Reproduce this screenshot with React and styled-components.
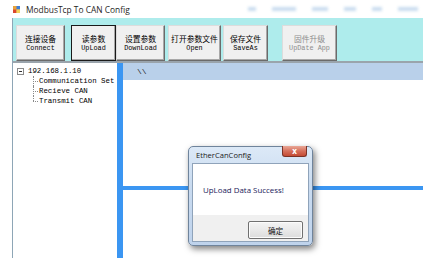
import React from 'react';
import styled, { createGlobalStyle } from 'styled-components';

const cjk = '"Noto Sans CJK SC", sans-serif';
const mono = '"Liberation Mono", "Noto Sans CJK SC", monospace';
const splitBlue = '#3b96f2';

const GlobalStyle = createGlobalStyle`
  html, body {
    margin: 0;
    padding: 0;
    background: #ffffff;
  }
  body {
    width: 432px;
    height: 258px;
    overflow: hidden;
    font-family: "Liberation Sans", sans-serif;
  }
`;

const Page = styled.div`
  position: relative;
  width: 432px;
  height: 258px;
  display: flex;
  flex-direction: column;
`;

const TitleBar = styled.div`
  height: 18px;
  display: flex;
  align-items: center;
  padding-left: 13px;
  gap: 6px;
  font-family: "Open Sans", "Liberation Sans", sans-serif;
  font-size: 8.4px;
  color: #1e1e1e;
`;

const Blurred = styled.div`
  margin-left: auto;
  margin-right: 14px;
  display: flex;
  gap: 16px;
  filter: blur(1.5px);
  span {
    display: block;
    height: 4px;
    background: #c9dcef;
  }
`;

const Window = styled.div`
  margin-left: 12px;
  width: 410px;
  flex: 1;
  display: flex;
  flex-direction: column;
  border-left: 1px solid #8ea6b6;
`;

const Toolbar = styled.div`
  height: 45px;
  background: #aeecec;
  display: flex;
  align-items: flex-start;
  padding: 7px 0 0 3px;
  box-sizing: border-box;
  border-bottom: 2px solid #9aa4ac;
`;

const ToolButton = styled.div`
  width: ${p => p.w}px;
  height: 36px;
  margin-left: ${p => p.gap || 0}px;
  box-sizing: border-box;
  background: #f0f0f0;
  border: 1px solid ${p => (p.focused ? '#1a1a1a' : '#dcdcdc')};
  border-right-color: ${p => (p.focused ? '#1a1a1a' : '#6b6b6b')};
  border-bottom-color: ${p => (p.focused ? '#1a1a1a' : '#6b6b6b')};
  box-shadow: inset -1px -1px 0 #a8a8a8;
  display: flex;
  flex-direction: column;
  align-items: center;
  justify-content: center;
  gap: 1px;
  color: ${p => (p.disabled ? '#8d8d8d' : '#000')};
`;

const Cn = styled.span`
  font-family: ${cjk};
  font-size: 7.8px;
  line-height: 9px;
  white-space: nowrap;
`;

const En = styled.span`
  font-family: ${mono};
  font-size: 6.8px;
  line-height: 8px;
  white-space: nowrap;
`;

const Main = styled.div`
  flex: 1;
  display: flex;
`;

const Tree = styled.div`
  width: 103px;
  background: #fff;
  padding-top: 3px;
  font-family: ${mono};
  font-size: 7.4px;
  color: #000;
`;

const RootRow = styled.div`
  height: 10px;
  display: flex;
  align-items: center;
  padding-left: 4px;
  gap: 4px;
`;

const ExpandBox = styled.span`
  width: 5px;
  height: 5px;
  border: 1px solid #8a8a8a;
  position: relative;
  &::after {
    content: '';
    position: absolute;
    left: 1px;
    right: 1px;
    top: 2px;
    height: 1px;
    background: #333;
  }
`;

const ChildRow = styled.div`
  height: 10px;
  display: flex;
  align-items: center;
  padding-left: 26px;
  position: relative;
  white-space: nowrap;
  &::before {
    content: '';
    position: absolute;
    left: 20px;
    top: 0;
    height: ${p => (p.last ? '5px' : '10px')};
    border-left: 1px dotted #8a8a8a;
  }
  &::after {
    content: '';
    position: absolute;
    left: 20px;
    top: 5px;
    width: 5px;
    border-top: 1px dotted #8a8a8a;
  }
`;

const Splitter = styled.div`
  width: 6px;
  margin-left: 1px;
  background: ${splitBlue};
`;

const Content = styled.div`
  flex: 1;
  display: flex;
  flex-direction: column;
  background: #fff;
`;

const Header = styled.div`
  height: 17px;
  background: #b9d0ea;
  padding-left: 14px;
  display: flex;
  align-items: center;
  font-family: ${mono};
  font-size: 8px;
  color: #222;
`;

const Pane = styled.div`
  height: ${p => p.h}px;
  flex: ${p => (p.h ? 'none' : 1)};
`;

const HLine = styled.div`
  height: 4px;
  background: ${splitBlue};
`;

/* message box floats over the window */
const Dialog = styled.div`
  position: absolute;
  left: 188px;
  top: 146px;
  width: 125px;
  height: 100px;
  box-sizing: border-box;
  border: 1px solid #6f849c;
  border-radius: 5px;
  background: linear-gradient(180deg, #dce9f7 0%, #c9dbf0 40%, #bfd3ec 100%);
  box-shadow: 2px 3px 6px rgba(0, 0, 0, 0.5);
  padding: 0 3px 3px 3px;
  display: flex;
  flex-direction: column;
`;

const DialogTitle = styled.div`
  height: 16px;
  display: flex;
  align-items: center;
  padding-left: 4px;
  font-family: "Open Sans", "Liberation Sans", sans-serif;
  font-size: 7.6px;
  color: #1a1a1a;
`;

const CloseButton = styled.div`
  margin-left: auto;
  margin-right: 2px;
  align-self: flex-start;
  margin-top: -1px;
  width: 25px;
  height: 11px;
  box-sizing: border-box;
  border: 1px solid #7b3226;
  border-top: none;
  border-radius: 0 0 3px 3px;
  background: linear-gradient(180deg, #e9a797 0%, #d6705c 50%, #c44a33 100%);
  color: #fff;
  font-size: 8px;
  font-weight: bold;
  display: flex;
  align-items: center;
  justify-content: center;
  line-height: 1;
`;

const DialogClient = styled.div`
  flex: 1;
  border: 1px solid #8fa3ba;
  display: flex;
  flex-direction: column;
`;

const Message = styled.div`
  height: 51px;
  background: #fff;
  display: flex;
  align-items: center;
  padding-left: 10px;
  font-family: "Open Sans", "Liberation Sans", sans-serif;
  font-size: 7.9px;
  color: #1a1a5a;
`;

const DialogFooter = styled.div`
  flex: 1;
  background: #f0f0f0;
  display: flex;
  justify-content: flex-end;
  align-items: flex-start;
  padding: 6px 5px 0 0;
`;

const OkButton = styled.div`
  width: 55px;
  height: 18px;
  box-sizing: border-box;
  border: 1px solid #707070;
  border-radius: 2px;
  background: linear-gradient(180deg, #f4f4f4 0%, #e9e9e9 50%, #dcdcdc 100%);
  box-shadow: inset 0 0 0 1px #fcfcfc;
  display: flex;
  align-items: center;
  justify-content: center;
  font-family: ${cjk};
  font-size: 7.6px;
  color: #111;
`;

const AppIcon = () => (
  <svg width="7" height="7" viewBox="0 0 7 7">
    <rect x="0" y="0" width="7" height="7" fill="#e8a33a" />
    <rect x="0" y="3.5" width="3.5" height="3.5" fill="#d9462f" />
    <rect x="3.5" y="0" width="3.5" height="3.5" fill="#3d7dd8" />
    <rect x="3.5" y="3.5" width="3.5" height="3.5" fill="#f2d35c" />
  </svg>
);

const buttons = [
  { cn: '连接设备', en: 'Connect', w: 49, gap: 0 },
  { cn: '读参数', en: 'UpLoad', w: 45, gap: 6, focused: true },
  { cn: '设置参数', en: 'DownLoad', w: 49, gap: 0 },
  { cn: '打开参数文件', en: 'Open', w: 53, gap: 3 },
  { cn: '保存文件', en: 'SaveAs', w: 45, gap: 2 },
  { cn: '固件升级', en: 'UpDate App', w: 55, gap: 14, disabled: true },
];

const blurWidths = [8, 24, 16, 12, 10, 20];

const treeItems = ['Communication Set', 'Recieve CAN', 'Transmit CAN'];

export default function App() {
  return (
    <>
      <GlobalStyle />
      <Page>
        <TitleBar>
          <AppIcon />
          <span>ModbusTcp To CAN Config</span>
          <Blurred>
            {blurWidths.map((w, i) => (
              <span key={i} style={{ width: w }} />
            ))}
          </Blurred>
        </TitleBar>
        <Window>
          <Toolbar>
            {buttons.map(b => (
              <ToolButton key={b.en} w={b.w} gap={b.gap} focused={b.focused} disabled={b.disabled}>
                <Cn>{b.cn}</Cn>
                <En>{b.en}</En>
              </ToolButton>
            ))}
          </Toolbar>
          <Main>
            <Tree>
              <RootRow>
                <ExpandBox />
                <span>192.168.1.10</span>
              </RootRow>
              {treeItems.map((t, i) => (
                <ChildRow key={t} last={i === treeItems.length - 1}>
                  {t}
                </ChildRow>
              ))}
            </Tree>
            <Splitter />
            <Content>
              <Header>\\</Header>
              <Pane h={106} />
              <HLine />
              <Pane />
            </Content>
          </Main>
        </Window>
        <Dialog>
          <DialogTitle>
            EtherCanConfig
            <CloseButton>x</CloseButton>
          </DialogTitle>
          <DialogClient>
            <Message>UpLoad Data Success!</Message>
            <DialogFooter>
              <OkButton>确定</OkButton>
            </DialogFooter>
          </DialogClient>
        </Dialog>
      </Page>
    </>
  );
}
